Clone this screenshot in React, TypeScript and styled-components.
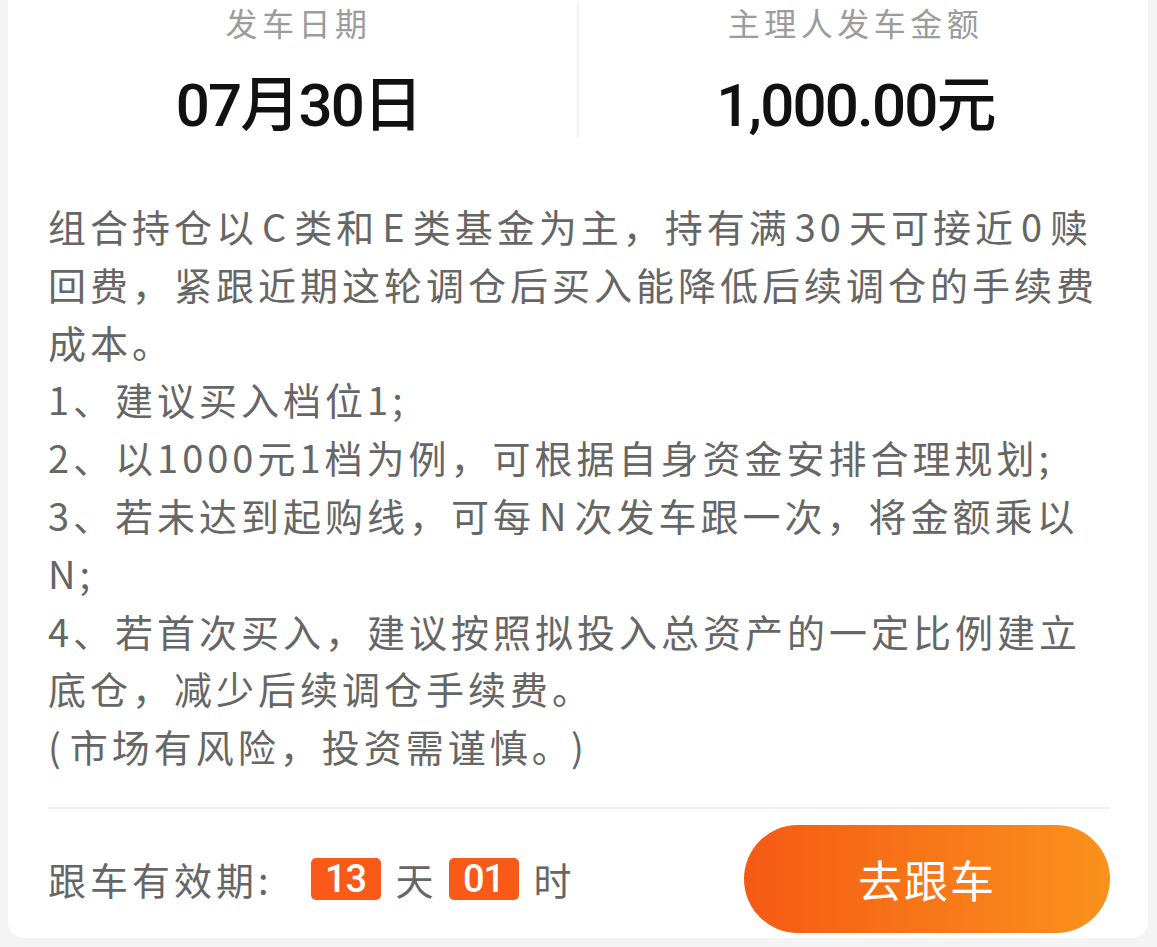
import React from "react";
import styled, { createGlobalStyle } from "styled-components";

const GlobalStyle = createGlobalStyle`
  body {
    margin: 0;
    background: #f4f4f4;
    font-family: "Noto Sans CJK SC", "Noto Sans", sans-serif;
  }
`;

const Page = styled.div`
  padding: 0 9px 10px 8px;
`;

const Card = styled.div`
  background: #ffffff;
  border-radius: 0 0 16px 16px;
  padding-bottom: 5px;
`;

const Summary = styled.div`
  display: grid;
  grid-template-columns: 569px 2px 1fr;
  padding: 3px 16px 0 0;
  height: 134px;
`;

const Stat = styled.div<{ $shift?: number }>`
  display: flex;
  flex-direction: column;
  align-items: center;
  padding-left: ${({ $shift }) => $shift ?? 0}px;
`;

const StatLabel = styled.div`
  font-size: 32px;
  line-height: 38px;
  letter-spacing: 4.5px;
  color: #9c9c9c;
`;

const StatValue = styled.div`
  margin-top: 35px;
  font-family: Roboto, "Noto Sans CJK SC", sans-serif;
  font-size: 60px;
  line-height: 60px;
  font-weight: 500;
  letter-spacing: -1.8px;
  color: #111111;
`;

const VDivider = styled.div`
  background: #f0f0f0;
`;

const Notes = styled.div`
  margin: 60px 38px 0 40px;
  font-size: 38px;
  line-height: 57.8px;
  letter-spacing: 4px;
  color: #666666;
`;

const NoteLine = styled.div`
  white-space: nowrap;
`;

const Latin = styled.span`
  margin: 0 4px;
`;

const Paren = styled.span<{ $close?: boolean }>`
  margin: ${({ $close }) => ($close ? "0 0 0 16px" : "0 5px 0 0")};
`;

const HDivider = styled.div`
  margin: 32px 38px 0 40px;
  height: 2px;
  background: #f0f0f0;
`;

const Footer = styled.div`
  display: flex;
  align-items: center;
  justify-content: space-between;
  margin: 16px 38px 0 40px;
`;

const Validity = styled.div`
  display: flex;
  align-items: center;
  font-size: 38px;
  letter-spacing: 4px;
  color: #666666;
`;

const Label = styled.span`
  margin-right: 38px;
`;

const Unit = styled.span`
  margin: 0 11px 0 15px;
`;

const Badge = styled.span`
  display: inline-flex;
  align-items: center;
  justify-content: center;
  width: 70px;
  height: 42px;
  border-radius: 5px;
  background: #fa5a18;
  color: #ffffff;
  font-family: Roboto, sans-serif;
  font-size: 38px;
  font-weight: 500;
  letter-spacing: -1px;
`;

const FollowButton = styled.button`
  width: 366px;
  height: 108px;
  border: none;
  border-radius: 54px;
  background: linear-gradient(90deg, #f55a14 0%, #fa921c 100%);
  color: #ffffff;
  font-family: "Noto Sans CJK SC", sans-serif;
  font-size: 44px;
  letter-spacing: 2px;
  cursor: pointer;
`;

const noteLines: React.ReactNode[] = [
  <>
    组合持仓以<Latin>C</Latin>类和<Latin>E</Latin>类基金为主，持有满
    <Latin>30</Latin>天可接近<Latin>0</Latin>赎
  </>,
  "回费，紧跟近期这轮调仓后买入能降低后续调仓的手续费",
  "成本。",
  "1、建议买入档位1;",
  "2、以1000元1档为例，可根据自身资金安排合理规划;",
  <>
    3、若未达到起购线，可每<Latin>N</Latin>次发车跟一次，将金额乘以
  </>,
  "N;",
  "4、若首次买入，建议按照拟投入总资产的一定比例建立",
  "底仓，减少后续调仓手续费。",
  <>
    <Paren>(</Paren>市场有风险，投资需谨慎。<Paren $close>)</Paren>
  </>,
];

export default function App() {
  return (
    <Page>
      <GlobalStyle />
      <Card>
        <Summary>
          <Stat $shift={12}>
            <StatLabel>发车日期</StatLabel>
            <StatValue>07月30日</StatValue>
          </Stat>
          <VDivider />
          <Stat>
            <StatLabel>主理人发车金额</StatLabel>
            <StatValue>1,000.00元</StatValue>
          </Stat>
        </Summary>

        <Notes>
          {noteLines.map((line, i) => (
            <NoteLine key={i}>{line}</NoteLine>
          ))}
        </Notes>

        <HDivider />

        <Footer>
          <Validity>
            <Label>跟车有效期:</Label>
            <Badge>13</Badge>
            <Unit>天</Unit>
            <Badge>01</Badge>
            <Unit>时</Unit>
          </Validity>
          <FollowButton>去跟车</FollowButton>
        </Footer>
      </Card>
    </Page>
  );
}
